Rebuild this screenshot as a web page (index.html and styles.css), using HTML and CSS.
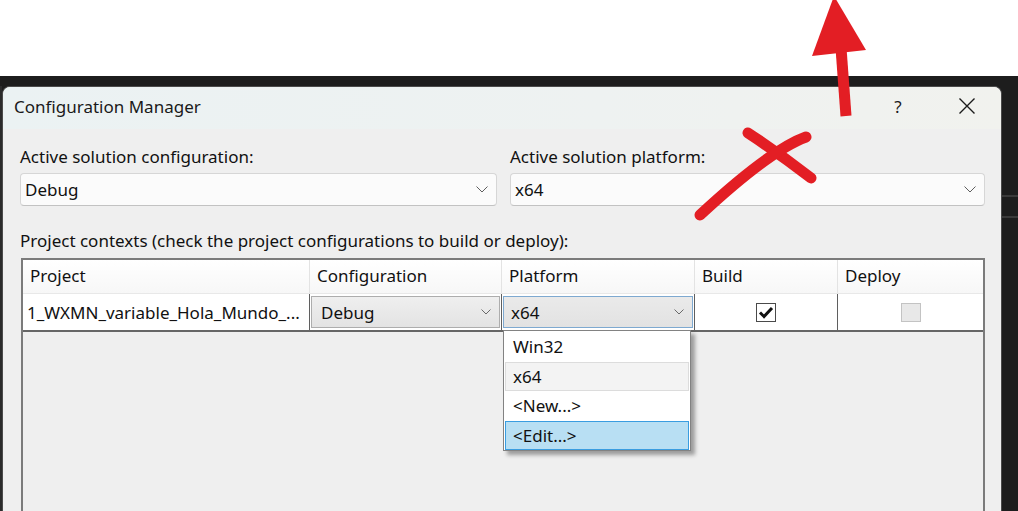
FILE: index.html
```html
<!DOCTYPE html>
<html>
<head>
<meta charset="utf-8">
<link rel="stylesheet" href="styles.css">
</head>
<body>
<div class="top"></div>
<div class="desk">
  <div class="edge-left"></div>
  <div class="dialog">
    <div class="titlebar">
      <span class="title">Configuration Manager</span>
      <span class="help">?</span>
      <span class="close"><svg width="18" height="18" viewBox="0 0 18 18"><path d="M1.5 1.5 L16.5 16.5 M16.5 1.5 L1.5 16.5" stroke="#1b1b1b" stroke-width="1.4" fill="none"/></svg></span>
    </div>
    <div class="content">
      <div class="selectors">
        <div class="field">
          <div class="label">Active solution configuration:</div>
          <div class="combo"><span>Debug</span><svg class="chev" width="12" height="7" viewBox="0 0 12 7"><path d="M0.5 0.5 L6 6 L11.5 0.5" stroke="#5e5e5e" stroke-width="1" fill="none"/></svg></div>
        </div>
        <div class="field">
          <div class="label">Active solution platform:</div>
          <div class="combo"><span>x64</span><svg class="chev" width="12" height="7" viewBox="0 0 12 7"><path d="M0.5 0.5 L6 6 L11.5 0.5" stroke="#5e5e5e" stroke-width="1" fill="none"/></svg></div>
        </div>
      </div>
      <div class="ctx-label">Project contexts (check the project configurations to build or deploy):</div>
      <div class="grid">
        <div class="hdr">
          <div class="hcell">Project</div>
          <div class="hcell">Configuration</div>
          <div class="hcell">Platform</div>
          <div class="hcell">Build</div>
          <div class="hcell last">Deploy</div>
        </div>
        <div class="row">
          <div class="cell name">1_WXMN_variable_Hola_Mundo_...</div>
          <div class="cell pad"><div class="gcombo"><span>Debug</span><svg class="chev" width="10" height="6" viewBox="0 0 10 6"><path d="M0.5 0.5 L5 5 L9.5 0.5" stroke="#6a6a6a" stroke-width="1" fill="none"/></svg></div></div>
          <div class="cell pad plat">
            <div class="gcombo focus"><span>x64</span><svg class="chev" width="10" height="6" viewBox="0 0 10 6"><path d="M0.5 0.5 L5 5 L9.5 0.5" stroke="#6a6a6a" stroke-width="1" fill="none"/></svg></div>
            <div class="dropdown">
              <div class="item">Win32</div>
              <div class="item cur">x64</div>
              <div class="item">&lt;New...&gt;</div>
              <div class="item sel">&lt;Edit...&gt;</div>
            </div>
          </div>
          <div class="cell center"><span class="check on"><svg width="18" height="17" viewBox="0 0 18 17"><path d="M3 8.5 L7 12.5 L15 4" stroke="#111" stroke-width="3" fill="none"/></svg></span></div>
          <div class="cell center last"><span class="check off"></span></div>
        </div>
        <div class="empty"></div>
      </div>
    </div>
  </div>
  <div class="side">
    <div class="sline"></div>
    <div class="sline second"></div>
  </div>
</div>
<svg class="annot" width="1018" height="511" viewBox="0 0 1018 511">
  <path d="M846 116 L841 48" stroke="#e31e24" stroke-width="11" fill="none"/>
  <polygon points="812,56 834,-4 866,50" fill="#e31e24"/>
  <path d="M748 133 Q780 154 811 178" stroke="#e31e24" stroke-width="11" stroke-linecap="round" fill="none"/>
  <path d="M806 137 Q770 150 700 215" stroke="#e31e24" stroke-width="11" stroke-linecap="round" fill="none"/>
</svg>
</body>
</html>
```
FILE: styles.css
```css
* { box-sizing: border-box; }
html, body { margin: 0; padding: 0; }
body {
  width: 1018px;
  height: 511px;
  overflow: hidden;
  background: #1d1d1d;
  font-family: "Noto Sans", "Open Sans", sans-serif;
  font-size: 17px;
  color: #111;
  position: relative;
}
.top { height: 76px; background: #ffffff; }
.desk {
  display: flex;
  align-items: flex-start;
  padding-top: 10px;
  background: #1d1d1d;
}
.edge-left { width: 2px; height: 440px; background: #2b2b2b; flex-shrink: 0; }
.dialog {
  width: 1000px;
  flex-shrink: 0;
  border: 1px solid #4a4a4a;
  border-bottom: none;
  border-radius: 8px 8px 0 0;
  background: #efefef;
  overflow: hidden;
}
.titlebar {
  height: 42px;
  display: flex;
  align-items: center;
  padding-left: 11px;
  padding-bottom: 4px;
  background: linear-gradient(90deg, #ebf2f3 0%, #eef2f1 60%, #f1f2ee 100%);
}
.title { font-size: 17px; flex: 1; color: #1a1a1a; }
.help { width: 24px; text-align: center; font-size: 17px; margin-right: 48px; color: #1a1a1a; }
.close { width: 18px; height: 18px; margin-right: 25px; display: flex; }
.content {
  padding: 17px 16px 0 17px;
}
.selectors {
  display: grid;
  grid-template-columns: 477px 475px;
  column-gap: 13px;
}
.label { height: 22px; line-height: 22px; margin-bottom: 5px; }
.combo {
  height: 33px;
  background: #fbfbfb;
  border: 1px solid #d6d6d6;
  border-bottom-color: #c2c2c2;
  border-radius: 4px;
  display: flex;
  align-items: center;
  justify-content: space-between;
  padding: 0 8px 0 4px;
}
.ctx-label { margin-top: 24px; height: 22px; line-height: 22px; }
.grid {
  margin-top: 6px;
  margin-left: 1px;
  width: 964px;
  border: 2px solid #7b7b7b;
  border-bottom: none;
  background: #efefef;
  height: 260px;
  display: flex;
  flex-direction: column;
}
.hdr, .row {
  display: grid;
  flex-shrink: 0;
  grid-template-columns: 287px 192px 193px 143px 145px;
}
.hdr { height: 34px; background: linear-gradient(#ffffff, #f7f7f7); border-bottom: 1px solid #e8e8e8; }
.hcell {
  padding-left: 7px;
  line-height: 32px;
  border-right: 1px solid #e3e3e3;
}
.hcell.last { border-right: none; }
.row {
  height: 38px;
  background: #ffffff;
  border-bottom: 2px solid #666666;
}
.cell {
  border-right: 1px solid #5f5f5f;
  display: flex;
  align-items: center;
}
.cell.last { border-right: none; }
.cell.name { padding-left: 4px; white-space: nowrap; }
.cell.pad { padding: 1px; }
.cell.center { justify-content: center; }
.plat { position: relative; }
.gcombo {
  flex: 1;
  height: 32px;
  border: 1px solid #adadad;
  background: linear-gradient(#efefef, #e3e3e3);
  display: flex;
  align-items: center;
  justify-content: space-between;
  padding: 0 8px 0 9px;
}
.gcombo.focus {
  border-color: #7ea9d0;
  padding-left: 7px;
  background: linear-gradient(#eaeaea, #e2e2e2);
}
.check {
  width: 20px;
  height: 19px;
  display: flex;
  align-items: center;
  justify-content: center;
}
.check.on { border: 1px solid #4a4a4a; background: #fff; }
.check.off { border: 1px solid #c3c3c3; background: #e8e8e8; }
.dropdown {
  position: absolute;
  top: 36px;
  left: 1px;
  width: 188px;
  height: 121px;
  background: #ffffff;
  border: 1px solid #828282;
  box-shadow: 4px 4px 4px rgba(0, 0, 0, 0.35);
  padding: 1px;
  z-index: 5;
}
.item {
  height: 29.5px;
  line-height: 28px;
  padding-left: 7px;
  border: 1px solid transparent;
}
.item.cur { background: #f3f3f3; border-color: #dcdcdc; }
.item.sel { background: #b8dff3; border-color: #3a9de0; }
.empty { flex: 1; background: #efefef; }
.side { flex: 1; padding-top: 109px; }
.sline { height: 2px; background: #3a3a3a; }
.sline.second { margin-top: 19px; }
.annot { position: absolute; left: 0; top: 0; pointer-events: none; }
```
